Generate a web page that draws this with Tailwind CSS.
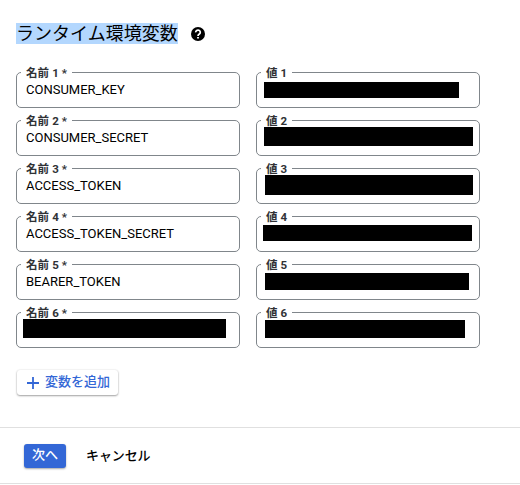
<!DOCTYPE html>
<html lang="ja">
<head>
  <meta charset="UTF-8" />
  <meta name="viewport" content="width=device-width, initial-scale=1.0"/>
  <title>ランタイム環境変数</title>
  <script src="https://cdn.jsdelivr.net/npm/@tailwindcss/browser@4"></script>
</head>
<body class="bg-white text-black font-[Roboto,'Noto_Sans_CJK_JP',sans-serif] text-[13px] overflow-hidden">

  <header class="flex items-center pt-[23px] pl-4">
    <h2 class="h-[21px] leading-[21px] text-[18px] bg-[#b3d7fe] whitespace-nowrap w-[162px]">ランタイム環境変数</h2>
    <svg class="ml-[13px] mt-px w-[14px] h-[14px]" viewBox="0 0 14 14">
      <circle cx="7" cy="7" r="7"/>
      <path d="M4.700 5.400a2.300 2.200 0 1 1 3.700 1.600C7.500 7.600 7 7.900 7 8.900" fill="none" stroke="white" stroke-width="1.700"/>
      <path d="M6.100 9.900h1.800v1.700H6.100z" fill="white"/>
    </svg>
  </header>

  <section id="fields" class="grid grid-cols-[224px_224px] gap-x-4 gap-y-3 pl-4 pt-7"></section>

  <div class="pl-[17px] pt-[22px]">
    <button class="flex items-center w-[101px] h-[25px] pl-[10px] rounded-[3px] text-[#3367d6] font-medium shadow-[0_1px_2px_rgba(0,0,0,0.35),0_0_2px_rgba(0,0,0,0.12)]">
      <svg class="w-3 h-3 mr-[6px]" viewBox="0 0 12 12"><path d="M6 0v12M0 6h12" stroke="currentColor" stroke-width="1.800"/></svg>
      <span class="leading-[24px] h-[25px] whitespace-nowrap">変数を追加</span>
    </button>
  </div>

  <footer class="mt-8 h-[57px] border-y border-[#e0e0e0] flex items-center pl-6">
    <button class="w-[42px] h-6 leading-[22px] rounded-[3px] bg-[#3367d6] text-white font-medium shadow-[0_1px_2px_rgba(0,0,0,0.35)] flex justify-center">次へ</button>
    <button class="ml-5 h-6 leading-[22px] font-medium tracking-[-0.1px] whitespace-nowrap">キャンセル</button>
  </footer>

  <script>
    // a field shows either its text or a masked bar: [left, top, width, height]
    const rows = [
      { name: "CONSUMER_KEY", value: [7, 9, 195, 16] },
      { name: "CONSUMER_SECRET", value: [7, 6, 209, 19] },
      { name: "ACCESS_TOKEN", value: [8, 6, 208, 20] },
      { name: "ACCESS_TOKEN_SECRET", value: [6, 8, 209, 16] },
      { name: "BEARER_TOKEN", value: [8, 8, 204, 17] },
      { name: [6, 6, 203, 19], value: [8, 7, 200, 18] }
    ];

    function createContent(v) {
      if (typeof v === 'string') {
        return `<p class="pl-[9px] pt-[8px] leading-[18px]">${v}</p>`;
      }
      return `<div class="relative bg-black" style="margin-left:${v[0]}px;top:${v[1]}px;width:${v[2]}px;height:${v[3]}px"></div>`;
    }

    function createField(label, v, notch) {
      return `
        <div class="relative h-9 border border-[#80868b] rounded-[5px]">
          <span class="absolute left-1 -top-[8px] h-4 leading-[17px] pl-[5px] bg-white text-[11.5px] tracking-[0.1px] font-bold text-[#303236] whitespace-nowrap ${notch}">${label}</span>
          ${createContent(v)}
        </div>`;
    }

    document.getElementById("fields").innerHTML = rows.map((r, i) =>
      createField(`名前 ${i + 1} *`, r.name, 'w-[51px]') + createField(`値 ${i + 1}`, r.value, 'w-[31px]')
    ).join('');
  </script>
</body>
</html>
